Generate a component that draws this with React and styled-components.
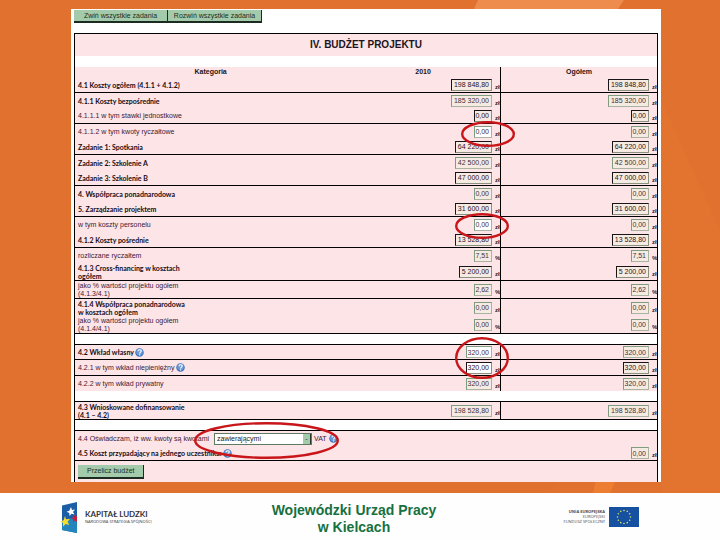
import React from "react";
import styled, { createGlobalStyle } from "styled-components";

const GlobalStyle = createGlobalStyle`
  *, *::before, *::after { box-sizing: border-box; }
  body {
    margin: 0;
    background: #fefefe;
    color: #1b1420;
    font-family: "Liberation Sans", Arial, sans-serif;
    font-size: 7px;
    line-height: 8px;
  }
`;

const Page = styled.div`
  min-height: 100vh;
  display: flex;
  flex-direction: column;
`;

const Stage = styled.main`
  position: relative;
  padding: 9px 59px 11px 71px;
  background: #e1712e;
`;

const Facets = styled.svg`
  position: absolute;
  inset: 0;
  width: 100%;
  height: 100%;
`;

const Panel = styled.section`
  position: relative;
  padding: 1px 3px 0;
  background: #fff;
`;

const Toolbar = styled.div`
  display: flex;
  margin-bottom: 10px;
`;

const Button = styled.button`
  height: 13px;
  padding: 0 4px;
  border: solid #1c2b20;
  border-width: 0 1px 2px 0;
  background: #a3cbab;
  color: #1c2b20;
  font: inherit;
  white-space: nowrap;
`;

const ToolButton = styled(Button)`
  width: 94px;
`;

const SubmitButton = styled(Button)`
  padding: 0 9px;
  height: 14px;
`;

const Table = styled.table`
  width: 100%;
  border: solid #000;
  border-width: 1px 1px 0;
  border-collapse: separate;
  border-spacing: 0;
  table-layout: fixed;
`;

const Col = styled.col`
  width: ${(p) => p.$w};
`;

const Row = styled.tr`
  height: ${(p) => p.$h}px;
  background: ${(p) => (p.$blank ? "#fff" : "#fde4e6")};

  & > * {
    padding: 0;
    border-bottom: ${(p) => (p.$line ? "1px solid #000" : "0")};
  }
`;

const Title = styled.th`
  font-size: 10px;
  line-height: 12px;
`;

const Heading = styled.th`
  font-size: 7px;
  border-right: ${(p) => (p.$divider ? "1px solid #000" : "0")};
`;

const Label = styled.th`
  && { padding-left: 3px; }
  text-align: left;
  white-space: nowrap;
  font-weight: ${(p) => (p.$bold ? 700 : 400)};
  font-family: ${(p) => (p.$bold ? "Lato, " : "")}"Liberation Sans", sans-serif;
  color: ${(p) => (p.$bold ? "#140c16" : "#3c2038")};
`;

const LabelLine = styled.span`
  display: flex;
  align-items: center;
  gap: 1px;
`;

const ValueCell = styled.td`
  position: relative;
  border-right: ${(p) => (p.$divider ? "1px solid #000" : "0")};
`;

const ValueGroup = styled.div`
  display: flex;
  justify-content: flex-end;
  align-items: flex-end;
  gap: 3px;
`;

const Amount = styled.input`
  width: ${(p) => p.$w}px;
  height: 12px;
  padding: 0 2px 0 0;
  border: 1px solid;
  border-color: ${(p) =>
    p.$dark ? "#1a1418 #8a9080 #8a9080 #1a1418" : "#7f9c80 #a9b39f #a9b39f #7f9c80"};
  border-radius: 0;
  background: ${(p) => (p.$editable ? "#fff" : "#f6ebe2")};
  color: ${(p) => (p.$dark ? "#2a1026" : "#43303c")};
  font: 7px/10px "Liberation Sans", Arial, sans-serif;
  text-align: right;
`;

const Unit = styled.span`
  width: 5px;
  overflow: hidden;
  font-size: 6px;
  line-height: 7px;
  font-weight: 700;
  color: #1d1830;
`;

const Ring = styled.svg`
  position: absolute;
  z-index: 1;
  pointer-events: none;
  top: ${(p) => p.$top}px;
  right: ${(p) => p.$right}px;
`;

const Choice = styled.label`
  display: flex;
  align-items: center;
  gap: 2px;
  white-space: nowrap;
`;

const ChoiceText = styled.span`
  width: 134px;
`;

const ChoiceHelp = styled.span`
  position: relative;
  display: flex;
`;

const SelectBox = styled.span`
  display: flex;
  width: 98px;
  height: 12px;
  border: 1px solid #5f7a63;
  background: #fff;
`;

const Select = styled.select`
  flex: 1;
  min-width: 0;
  appearance: none;
  border: 0;
  border-radius: 0;
  padding: 0 2px;
  background: transparent;
  color: #222;
  font: 7px/10px "Liberation Sans", Arial, sans-serif;
`;

const Arrow = styled.span`
  width: 8px;
  border-right: 1px solid #26382a;
  background: #a3cbab;
  text-align: center;
  line-height: 9px;
`;

const Actions = styled.td`
  && { padding: 4px 3px 0; }
  vertical-align: top;
`;

const Footer = styled.footer`
  flex: 1;
  display: grid;
  grid-template-columns: 1fr auto 1fr;
  align-items: start;
  padding: 9px 81px 0 60px;
`;

const Brand = styled.div`
  display: flex;
  gap: 8px;
`;

const BrandText = styled.div`
  padding-top: 8px;
  white-space: nowrap;
  color: #33343c;
`;

const BrandName = styled.div`
  font: 700 8px/9px Lato, sans-serif;
`;

const BrandNote = styled.div`
  font: 4px/6px "Open Sans", sans-serif;
`;

const Office = styled.div`
  padding-left: 9px;
  color: #17703f;
  font-size: 14px;
  line-height: 17px;
  font-weight: 700;
  text-align: center;
`;

const Union = styled.div`
  display: flex;
  justify-content: flex-end;
  gap: 4px;
  padding-top: 5px;
`;

const UnionText = styled.div`
  padding-top: 2px;
  color: #4a4a52;
  text-align: right;
  font: 4px/5px "Open Sans", sans-serif;
  white-space: nowrap;
`;

const Help = () => (
  <svg width="9" height="9" viewBox="0 0 18 18" role="img" aria-label="Pomoc">
    <circle cx="9" cy="9" r="8.5" fill="#3f74bd" />
    <circle cx="9" cy="8" r="6.5" fill="#6d9ad6" />
    <path d="M6 6.5c0-4 6.5-4 6.5-.5 0 2.2-3.2 2.3-3.2 4.8" fill="none" stroke="#fff" strokeWidth="2.2" />
    <circle cx="9.2" cy="13.8" r="1.4" fill="#fff" />
  </svg>
);

const Highlight = ({ w, h, top, right }) => (
  <Ring width={w} height={h} $top={top} $right={right} aria-hidden="true">
    <ellipse cx={w / 2} cy={h / 2} rx={w / 2 - 1.2} ry={h / 2 - 1.2} fill="none" stroke="#c8161a" strokeWidth="2.4" />
  </Ring>
);

const widths = { 10: 41, 9: 37, 8: 33, 6: 26, 4: 18 };

const Value = ({ value, unit, name, dark, editable, divider, children }) => (
  <ValueCell $divider={divider}>
    <ValueGroup>
      <Amount
        aria-label={name}
        defaultValue={value}
        readOnly={!editable}
        $w={widths[value.length]}
        $dark={dark}
        $editable={editable}
      />
      <Unit>{unit}</Unit>
    </ValueGroup>
    {children}
  </ValueCell>
);

const costs = [
  { h: 16, text: ["4.1 Koszty ogółem (4.1.1 + 4.1.2)"], bold: true, value: "198 848,80", dark: true, line: true },
  { h: 15, text: ["4.1.1 Koszty bezpośrednie"], bold: true, value: "185 320,00" },
  { h: 16, text: ["4.1.1.1 w tym stawki jednostkowe"], value: "0,00", dark: true, line: true },
  { h: 15, text: ["4.1.1.2 w tym kwoty ryczałtowe"], value: "0,00", editable: true, ring: { w: 54, h: 26, top: -3, right: -15 } },
  { h: 16, text: ["Zadanie 1: Spotkania"], bold: true, value: "64 220,00", dark: true, line: true },
  { h: 15, text: ["Zadanie 2: Szkolenie A"], bold: true, value: "42 500,00" },
  { h: 16, text: ["Zadanie 3: Szkolenie B"], bold: true, value: "47 000,00", dark: true, line: true },
  { h: 15, text: ["4. Współpraca ponadnarodowa"], bold: true, value: "0,00" },
  { h: 16, text: ["5. Zarządzanie projektem"], bold: true, value: "31 600,00", dark: true, line: true },
  { h: 15, text: ["w tym koszty personelu"], value: "0,00", editable: true, ring: { w: 54, h: 26, top: -4, right: -9 } },
  { h: 16, text: ["4.1.2 Koszty pośrednie"], bold: true, value: "13 528,80", dark: true, line: true },
  { h: 15, text: ["rozliczane ryczałtem"], value: "7,51", unit: "%" },
  { h: 18, text: ["4.1.3 Cross-financing w kosztach", "ogółem"], bold: true, value: "5 200,00", dark: true, line: true },
  { h: 18, text: ["jako % wartości projektu ogółem", "(4.1.3/4.1)"], value: "2,62", unit: "%", line: true },
  { h: 17, text: ["4.1.4 Współpraca ponadnarodowa", "w kosztach ogółem"], bold: true, value: "0,00" },
  { h: 18, text: ["jako % wartości projektu ogółem", "(4.1.4/4.1)"], value: "0,00", unit: "%", line: true },
];

const contribution = [
  { h: 15, text: ["4.2 Wkład własny"], bold: true, help: true, value: "320,00", editable: true, line: true, ring: { w: 54, h: 42, top: -8, right: -9 } },
  { h: 16, text: ["4.2.1 w tym wkład niepieniężny"], help: true, value: "320,00", dark: true, editable: true, line: true },
  { h: 15, text: ["4.2.2 w tym wkład prywatny"], value: "320,00" },
];

const funding = [
  { h: 18, text: ["4.3 Wnioskowane dofinansowanie", "(4.1 – 4.2)"], bold: true, value: "198 528,80", line: true },
];

const BudgetRow = ({ row }) => {
  const { h, text, bold, help, value, unit = "zł", dark, editable, line, ring } = row;
  return (
    <Row $h={h} $line={line}>
      <Label scope="row" $bold={bold}>
        {text.map((part) => (
          <LabelLine key={part}>
            {part}
            {help && <Help />}
          </LabelLine>
        ))}
      </Label>
      <Value name={`${text.join(" ")}, 2010`} value={value} unit={unit} dark={dark} editable={editable} divider>
        {ring && <Highlight {...ring} />}
      </Value>
      <Value name={`${text.join(" ")}, ogółem`} value={value} unit={unit} dark={dark} />
    </Row>
  );
};

const Spacer = ({ line }) => (
  <Row $h={11} $blank $line={line}>
    <td colSpan={3} />
  </Row>
);

const KapitalLogo = () => (
  <svg width="17" height="31" viewBox="0 0 17 31" aria-hidden="true">
    <path d="M2 3.5 17 0v31L2 28z" fill="#1b5ea6" />
    <path d="M2 20 17 14v17L2 28z" fill="#2485bd" />
    <path d="m11 5 1 3 3-.5-2 2.500 1.500 2.500-3-.8-2 2.300-.2-3-2.800-1.300 2.800-1z" fill="#fff" />
    <path d="m15 12 .5 2.500L17 14v6l-2-1.500-2 1.500.3-2.500-2-1.500 2.500-.5z" fill="#c2203c" />
    <path d="m5 14 1 3.300 4-.6-2.400 3 1.700 3.300-3.500-1-2.800 2.500v-3.700L0 19.500l3.600-1.200z" fill="#f7dc2e" />
  </svg>
);

const EuFlag = () => (
  <svg width="30" height="20" viewBox="0 0 30 20" role="img" aria-label="Unia Europejska">
    <rect width="30" height="20" fill="#1650a0" />
    {Array.from({ length: 12 }, (_, i) => {
      const a = (i * Math.PI) / 6;
      return <circle key={i} cx={15 + 6.5 * Math.sin(a)} cy={10 - 6.5 * Math.cos(a)} r="0.8" fill="#d9dc6a" />;
    })}
  </svg>
);

export default function App() {
  return (
    <Page>
      <GlobalStyle />
      <Stage>
        <Facets viewBox="0 0 720 493" preserveAspectRatio="none" aria-hidden="true">
          <path d="M478 0H624L608 24H467z" fill="#ed8c4c" />
          <path d="M661 100 720 230V493H661z" fill="#e3742f" />
          <path d="M596 480H616L610 493H593z" fill="#ed7d31" />
          <path d="M105 480H560L540 493H98z" fill="#e0702d" />
        </Facets>
        <Panel>
          <Toolbar>
            <ToolButton type="button">Zwiń wszystkie zadania</ToolButton>
            <ToolButton type="button">Rozwiń wszystkie zadania</ToolButton>
          </Toolbar>
          <Table>
            <colgroup>
              <Col $w="46.6%" />
              <Col $w="26.6%" />
              <Col $w="26.8%" />
            </colgroup>
            <thead>
              <Row $h={22}>
                <Title colSpan={3}>IV. BUDŻET PROJEKTU</Title>
              </Row>
              <Spacer />
              <Row $h={10}>
                <Heading scope="col">Kategoria</Heading>
                <Heading scope="col" $divider>2010</Heading>
                <Heading scope="col">Ogółem</Heading>
              </Row>
            </thead>
            <tbody>
              {costs.map((row) => <BudgetRow key={row.text.join()} row={row} />)}
              <Spacer line />
              {contribution.map((row) => <BudgetRow key={row.text.join()} row={row} />)}
              <Spacer line />
              {funding.map((row) => <BudgetRow key={row.text.join()} row={row} />)}
              <Spacer line />
              <Row $h={15}>
                <Label as="td" colSpan={3}>
                  <Choice>
                    <ChoiceText>4.4 Oświadczam, iż ww. kwoty są kwotami</ChoiceText>
                    <SelectBox>
                      <Select defaultValue="z">
                        <option value="z">zawierającymi</option>
                        <option value="n">niezawierającymi</option>
                      </Select>
                      <Arrow aria-hidden="true">-</Arrow>
                    </SelectBox>
                    <span>VAT</span>
                    <ChoiceHelp>
                      <Help />
                      <Highlight w={145} h={37} top={-12} right={-1} />
                    </ChoiceHelp>
                  </Choice>
                </Label>
              </Row>
              <Row $h={15} $line>
                <Label scope="row" $bold colSpan={2}>
                  <LabelLine>
                    4.5 Koszt przypadający na jednego uczestnika:
                    <Help />
                  </LabelLine>
                </Label>
                <Value name="4.5 Koszt przypadający na jednego uczestnika" value="0,00" unit="zł" />
              </Row>
              <Row $h={21}>
                <Actions colSpan={3}>
                  <SubmitButton type="button">Przelicz budżet</SubmitButton>
                </Actions>
              </Row>
            </tbody>
          </Table>
        </Panel>
      </Stage>
      <Footer>
        <Brand>
          <KapitalLogo />
          <BrandText>
            <BrandName>KAPITAŁ LUDZKI</BrandName>
            <BrandNote>NARODOWA STRATEGIA SPÓJNOŚCI</BrandNote>
          </BrandText>
        </Brand>
        <Office>
          Wojewódzki Urząd Pracy
          <br />w Kielcach
        </Office>
        <Union>
          <UnionText>
            <b>UNIA EUROPEJSKA</b>
            <br />
            EUROPEJSKI
            <br />
            FUNDUSZ SPOŁECZNY
          </UnionText>
          <EuFlag />
        </Union>
      </Footer>
    </Page>
  );
}
